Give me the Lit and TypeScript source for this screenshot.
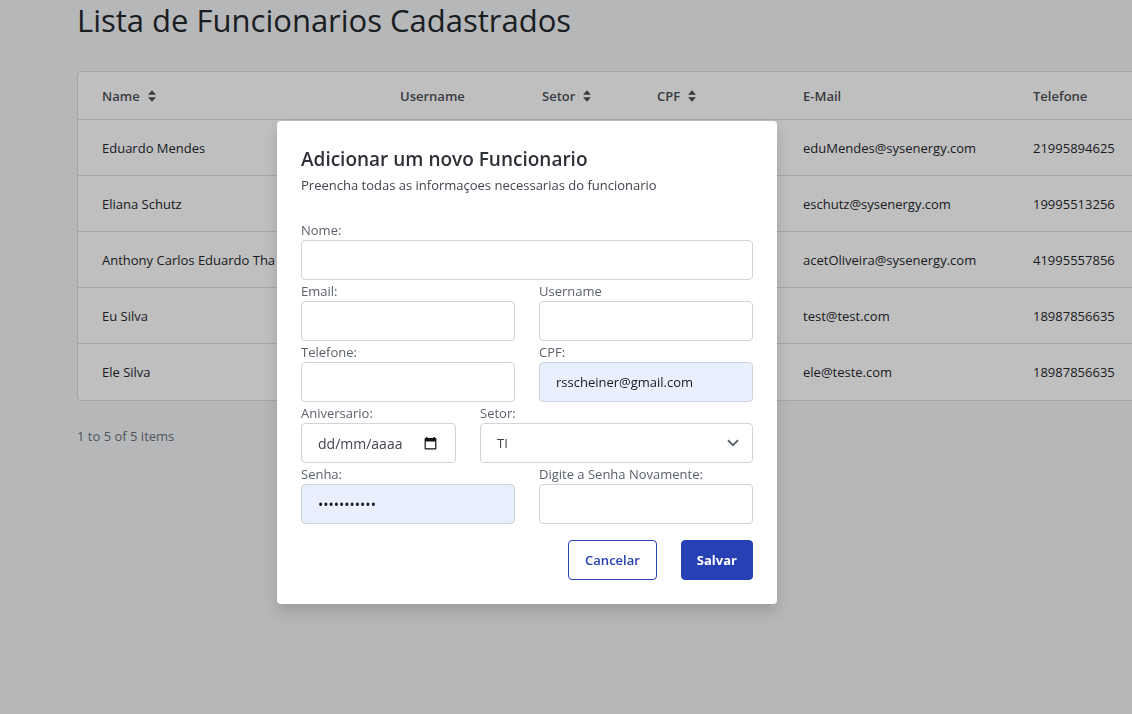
import { LitElement, html, css, svg } from "lit";
import { customElement, property } from "lit/decorators.js";

interface Employee {
  name: string;
  email: string;
  phone: string;
}

const EMPLOYEES: Employee[] = [
  { name: "Eduardo Mendes", email: "eduMendes@sysenergy.com", phone: "21995894625" },
  { name: "Eliana Schutz", email: "eschutz@sysenergy.com", phone: "19995513256" },
  { name: "Anthony Carlos Eduardo Tha", email: "acetOliveira@sysenergy.com", phone: "41995557856" },
  { name: "Eu Silva", email: "test@test.com", phone: "18987856635" },
  { name: "Ele Silva", email: "ele@teste.com", phone: "18987856635" },
];

const COLUMNS = [
  { key: "name", label: "Name", sortable: true },
  { key: "username", label: "Username", sortable: false },
  { key: "sector", label: "Setor", sortable: true },
  { key: "cpf", label: "CPF", sortable: true },
  { key: "email", label: "E-Mail", sortable: false },
  { key: "phone", label: "Telefone", sortable: false },
];

const sortIcon = html`<svg class="sort-icon" viewBox="0 0 8 12" width="8" height="12" aria-hidden="true">
  <path d="M4 0.3 L8 4.8 H0 Z M0 7.2 H8 L4 11.7 Z" fill="currentColor"/>
</svg>`;

@customElement("employee-table")
export class EmployeeTable extends LitElement {
  @property({ attribute: false }) rows: Employee[] = [];

  static styles = css`
    :host {
      display: block;
    }
    .card {
      width: max-content;
      min-width: 100%;
      box-sizing: border-box;
      background: #fff;
      border: 1px solid #dcdee1;
      border-radius: 4px;
    }
    .table {
      min-width: 100%;
      border-collapse: separate;
      border-spacing: 0;
    }
    .col-name { width: 298px; min-width: 298px; }
    .col-username { width: 142px; min-width: 142px; }
    .col-sector { width: 115px; min-width: 115px; }
    .col-cpf { width: 146px; min-width: 146px; }
    .col-email { width: 230px; min-width: 230px; }
    .col-phone { width: 178px; min-width: 178px; }
    .head,
    .cell {
      box-sizing: border-box;
      padding: 0 0 0 24px;
      text-align: left;
      white-space: nowrap;
      border-bottom: 1px solid #dcdee1;
    }
    .head {
      height: 48px;
      font-weight: 600;
      color: #4b5058;
    }
    .cell {
      height: 56px;
      color: #25282d;
    }
    .row:last-child .cell {
      border-bottom: 0;
    }
    .sort {
      display: inline-flex;
      align-items: center;
      gap: 8px;
      padding: 0;
      border: 0;
      background: none;
      font: inherit;
      color: inherit;
    }
    .footer {
      margin: 24px 0 0;
      line-height: 22px;
      color: #6b7178;
    }
  `;

  render() {
    return html`
      <div class="card">
        <table class="table">
          <thead>
            <tr>
              ${COLUMNS.map(
                (c) => html`<th class="head col-${c.key}" scope="col">
                  ${c.sortable
                    ? html`<button class="sort" type="button">${c.label}${sortIcon}</button>`
                    : c.label}
                </th>`
              )}
            </tr>
          </thead>
          <tbody>
            ${this.rows.map(
              (r) => html`<tr class="row">
                <td class="cell">${r.name}</td>
                <td class="cell"></td>
                <td class="cell"></td>
                <td class="cell"></td>
                <td class="cell">${r.email}</td>
                <td class="cell">${r.phone}</td>
              </tr>`
            )}
          </tbody>
        </table>
      </div>
      <p class="footer">1 to ${this.rows.length} of ${this.rows.length} items</p>
    `;
  }
}

@customElement("employee-dialog")
export class EmployeeDialog extends LitElement {
  static styles = css`
    :host {
      position: fixed;
      inset: 0;
      display: flex;
      justify-content: center;
      align-items: flex-start;
      padding: 121px 78px 0 0;
      background: rgba(0, 0, 0, 0.25);
    }
    .dialog {
      position: static;
      box-sizing: border-box;
      width: 500px;
      max-width: 100%;
      margin: 0;
      padding: 24px;
      border: 0;
      border-radius: 4px;
      background: #fff;
      color: #2e3238;
      box-shadow: 0 8px 16px rgba(0, 0, 0, 0.16);
    }
    .title {
      margin: 0;
      font-size: 19px;
      line-height: 28px;
      font-weight: 600;
    }
    .subtitle {
      margin: 0 0 22px;
      line-height: 24px;
      color: #40454d;
    }
    .fields {
      display: grid;
      grid-template-columns: 1fr;
    }
    .pair {
      display: grid;
      grid-template-columns: 1fr 1fr;
      column-gap: 24px;
    }
    .pair.narrow-first {
      grid-template-columns: 155fr 273fr;
    }
    .field {
      display: flex;
      flex-direction: column;
      min-width: 0;
    }
    .label {
      padding-top: 1px;
      line-height: 20px;
      color: #5b616b;
    }
    .box {
      display: flex;
      align-items: center;
      box-sizing: border-box;
      height: 40px;
      border: 1px solid #cfd3dc;
      border-radius: 4px;
      background: #fff;
      position: relative;
    }
    .box.filled {
      background: #e8effd;
    }
    .control {
      box-sizing: border-box;
      width: 100%;
      min-width: 0;
      height: 38px;
      padding: 0 16px;
      border: 0;
      border-radius: 3px;
      outline: none;
      background: transparent;
      appearance: none;
      font: inherit;
      color: #40454d;
    }
    .filled .control {
      color: #17191c;
    }
    .control[type="password"],
    .control.date {
      font-size: 14px;
    }
    .control::placeholder {
      color: #40454d;
      opacity: 1;
    }
    .picker {
      flex: none;
      display: flex;
      padding: 0;
      margin-right: 18px;
      border: 0;
      background: none;
      color: #111;
    }
    .control.date {
      padding-right: 0;
    }
    .chevron {
      position: absolute;
      right: 13px;
      pointer-events: none;
      color: #60666f;
    }
    .actions {
      display: flex;
      justify-content: flex-end;
      gap: 24px;
      margin-top: 16px;
    }
    .button {
      height: 40px;
      padding: 0 16px;
      border: 1px solid #2740b4;
      border-radius: 4px;
      background: #fff;
      color: #2740b4;
      font: inherit;
      font-weight: 600;
    }
    .button.primary {
      padding: 0 15px;
      background: #2740b4;
      color: #fff;
      font-weight: 700;
    }
  `;

  private field(id: string, label: string, type = "text", value = "") {
    return html`<div class="field">
      <label class="label" for=${id}>${label}</label>
      <div class="box ${value ? "filled" : ""}">
        <input class="control" id=${id} type=${type} .value=${value} autocomplete="off" />
      </div>
    </div>`;
  }

  render() {
    return html`
      <dialog class="dialog" open aria-labelledby="title">
        <h2 class="title" id="title">Adicionar um novo Funcionario</h2>
        <p class="subtitle">Preencha todas as informaçoes necessarias do funcionario</p>
        <form class="form">
          <div class="fields">
            ${this.field("nome", "Nome:")}
            <div class="pair">
              ${this.field("email", "Email:")} ${this.field("username", "Username")}
            </div>
            <div class="pair">
              ${this.field("telefone", "Telefone:", "tel")}
              ${this.field("cpf", "CPF:", "text", "rsscheiner@gmail.com")}
            </div>
            <div class="pair narrow-first">
              <div class="field">
                <label class="label" for="aniversario">Aniversario:</label>
                <div class="box">
                  <input class="control date" id="aniversario" type="text" placeholder="dd/mm/aaaa" />
                  <button class="picker" type="button" aria-label="Abrir calendario">
                    <svg viewBox="0 0 13 13" width="13" height="13" aria-hidden="true">
                      <path
                        fill="currentColor"
                        fill-rule="evenodd"
                        d="M2 0 H3.4 V1 H9.6 V0 H11 V1 H11.6 Q12.4 1 12.4 1.8 V11.6 Q12.4 12.4 11.6 12.4 H1.4 Q0.6 12.4 0.6 11.6 V1.8 Q0.6 1 1.4 1 H2 Z M1.8 4.4 V11.2 H11.2 V4.4 Z"
                      />
                    </svg>
                  </button>
                </div>
              </div>
              <div class="field">
                <label class="label" for="setor">Setor:</label>
                <div class="box">
                  <select class="control" id="setor">
                    <option selected>TI</option>
                  </select>
                  <svg class="chevron" viewBox="0 0 12 8" width="12" height="8" aria-hidden="true">
                    <path d="M1 1.2 L6 6.2 L11 1.2" fill="none" stroke="currentColor" stroke-width="2" />
                  </svg>
                </div>
              </div>
            </div>
            <div class="pair">
              ${this.field("senha", "Senha:", "password", "funcionario")}
              ${this.field("senha2", "Digite a Senha Novamente:", "password")}
            </div>
          </div>
          <div class="actions">
            <button class="button" type="button">Cancelar</button>
            <button class="button primary" type="button">Salvar</button>
          </div>
        </form>
      </dialog>
    `;
  }
}

@customElement("app-root")
export class AppRoot extends LitElement {
  static styles = css`
    :host {
      display: block;
      box-sizing: border-box;
      min-height: 100vh;
      overflow: hidden;
      padding-left: 77px;
      background: #f3f5f7;
      font-family: "Open Sans", "Noto Sans", sans-serif;
      font-size: 13px;
      line-height: 20px;
      color: #25282d;
    }
    .heading {
      margin: 0 0 31px;
      font-size: 31px;
      line-height: 40px;
      font-weight: 500;
      color: #25282d;
    }
  `;

  render() {
    return html`
      <main>
        <h1 class="heading">Lista de Funcionarios Cadastrados</h1>
        <employee-table .rows=${EMPLOYEES}></employee-table>
      </main>
      <employee-dialog></employee-dialog>
    `;
  }
}
